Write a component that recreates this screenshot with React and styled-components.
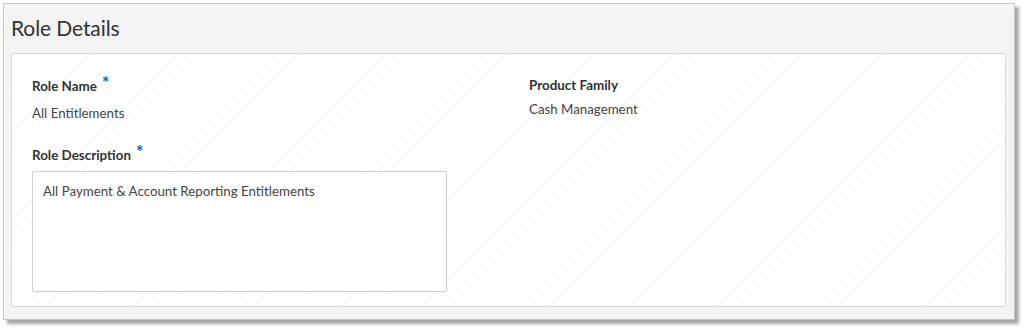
import styled, { createGlobalStyle } from "styled-components";

const GlobalStyle = createGlobalStyle`
  html, body {
    margin: 0;
    padding: 0;
    background: #ffffff;
  }
  body {
    font-family: "Lato", "Open Sans", sans-serif;
  }
`;

const Page = styled.div`
  width: 1024px;
  height: 329px;
  padding: 3px 0 0 3px;
  box-sizing: border-box;
`;

const Panel = styled.section`
  width: 1012px;
  height: 317px;
  box-sizing: border-box;
  background: #f4f4f4;
  border: 1px solid #c6c6c6;
  box-shadow: 4px 4px 3px rgba(0, 0, 0, 0.35);
  padding: 0 7px;
  display: flex;
  flex-direction: column;
`;

const Title = styled.h2`
  margin: 0;
  height: 49px;
  display: flex;
  align-items: center;
  padding-bottom: 2px;
  box-sizing: border-box;
  font-family: "Lato", "Open Sans", sans-serif;
  font-weight: 400;
  font-size: 21px;
  color: #333;
  letter-spacing: -0.1px;
`;

const Card = styled.div`
  width: 995px;
  height: 254px;
  box-sizing: border-box;
  border: 1px solid #d9d9d9;
  border-radius: 3px;
  background-color: #ffffff;
  background-image: repeating-linear-gradient(
    -45deg,
    transparent 0px,
    transparent 6px,
    #f8f8f8 6px,
    #f8f8f8 7px
  );
  padding: 22px 20px 0 20px;
  display: grid;
  grid-template-columns: 497px 1fr;
`;

const Column = styled.div`
  display: flex;
  flex-direction: column;
`;

const Label = styled.div`
  font-size: 13.4px;
  font-weight: 700;
  color: #333;
  margin-top: ${(props) => props.mt || "0px"};
  line-height: 18px;
`;

const Required = styled.span`
  color: #0f72b4;
  font-size: 17px;
  font-weight: 900;
  position: relative;
  top: -2px;
  margin-left: 5px;
`;

const Value = styled.div`
  font-size: 13.3px;
  color: #444;
  line-height: 18px;
  margin-top: ${(props) => props.mt || "6px"};
`;

const TextArea = styled.div`
  margin-top: 7px;
  width: 415px;
  height: 121px;
  box-sizing: border-box;
  border: 1px solid #cfcfcf;
  border-radius: 2px;
  background: #ffffff;
  padding: 10px 10px;
  font-size: 13.3px;
  color: #444;
  line-height: 18px;
`;

export default function App() {
  return (
    <Page>
      <GlobalStyle />
      <Panel>
        <Title>Role Details</Title>
        <Card>
          <Column>
            <Label>
              Role Name<Required>*</Required>
            </Label>
            <Value mt="9px">All Entitlements</Value>
            <Label mt="23px">
              Role Description<Required>*</Required>
            </Label>
            <TextArea>All Payment &amp; Account Reporting Entitlements</TextArea>
          </Column>
          <Column>
            <Label>Product Family</Label>
            <Value>Cash Management</Value>
          </Column>
        </Card>
      </Panel>
    </Page>
  );
}
